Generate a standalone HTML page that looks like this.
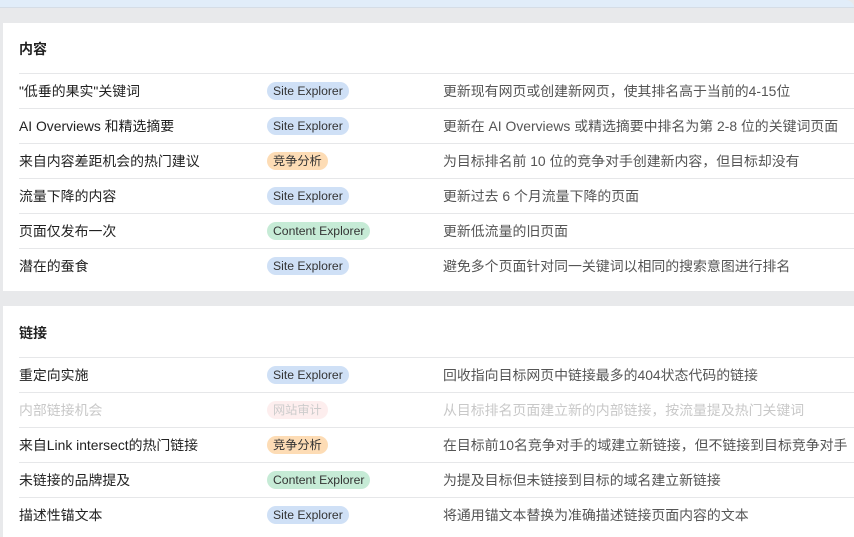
<!DOCTYPE html>
<html><head><meta charset="utf-8"><style>
body{margin:0;width:854px;height:537px;overflow:hidden;background:#e8e9eb;font-family:"Liberation Sans","Noto Sans CJK SC",sans-serif;position:relative}
.top{position:absolute;left:0;top:0;width:854px;height:7px;background:#e1edf9;border-bottom:1px solid #d5dde6;border-top-right-radius:12px}
.card{position:absolute;left:3px;width:851px;background:#fff}
h3{position:absolute;left:16px;margin:0;font-size:14px;font-weight:bold;color:#222}
.row{position:absolute;left:16px;right:0;height:35px;border-top:1px solid #e6e7e9;font-size:13.9px;color:#222}
.row span{position:absolute;top:0;line-height:34px;white-space:nowrap}
.a{left:0}.c{left:424px;color:#555}
.row .b{left:248px;top:8px;height:18px;line-height:18px;padding:0 6px;border-radius:9px;font-size:12.2px;color:#333}
.s{background:#cfe0f6}.k{background:#fddcb5}.g{background:#c6ebd6}.row .r{background:#fdeeee;color:#ccc}
.dim span{color:#c8c8c8}
</style></head><body>
<div class="top"></div>
<div class="card" style="top:23px;height:268px">
<h3 style="top:16px">内容</h3>
<div class="row" style="top:50px"><span class="a">"低垂的果实"关键词</span><span class="b s">Site Explorer</span><span class="c">更新现有网页或创建新网页，使其排名高于当前的4-15位</span></div>
<div class="row" style="top:85px"><span class="a">AI Overviews 和精选摘要</span><span class="b s">Site Explorer</span><span class="c">更新在 AI Overviews 或精选摘要中排名为第 2-8 位的关键词页面</span></div>
<div class="row" style="top:120px"><span class="a">来自内容差距机会的热门建议</span><span class="b k">竞争分析</span><span class="c">为目标排名前 10 位的竞争对手创建新内容，但目标却没有</span></div>
<div class="row" style="top:155px"><span class="a">流量下降的内容</span><span class="b s">Site Explorer</span><span class="c">更新过去 6 个月流量下降的页面</span></div>
<div class="row" style="top:190px"><span class="a">页面仅发布一次</span><span class="b g">Content Explorer</span><span class="c">更新低流量的旧页面</span></div>
<div class="row" style="top:225px"><span class="a">潜在的蚕食</span><span class="b s">Site Explorer</span><span class="c">避免多个页面针对同一关键词以相同的搜索意图进行排名</span></div>
</div>
<div class="card" style="top:306px;height:231px">
<h3 style="top:17px">链接</h3>
<div class="row" style="top:51px"><span class="a">重定向实施</span><span class="b s">Site Explorer</span><span class="c">回收指向目标网页中链接最多的404状态代码的链接</span></div>
<div class="row dim" style="top:86px"><span class="a">内部链接机会</span><span class="b r">网站审计</span><span class="c">从目标排名页面建立新的内部链接，按流量提及热门关键词</span></div>
<div class="row" style="top:121px"><span class="a">来自Link intersect的热门链接</span><span class="b k">竞争分析</span><span class="c">在目标前10名竞争对手的域建立新链接，但不链接到目标竞争对手</span></div>
<div class="row" style="top:156px"><span class="a">未链接的品牌提及</span><span class="b g">Content Explorer</span><span class="c">为提及目标但未链接到目标的域名建立新链接</span></div>
<div class="row" style="top:191px"><span class="a">描述性锚文本</span><span class="b s">Site Explorer</span><span class="c">将通用锚文本替换为准确描述链接页面内容的文本</span></div>
</div>
</body></html>
